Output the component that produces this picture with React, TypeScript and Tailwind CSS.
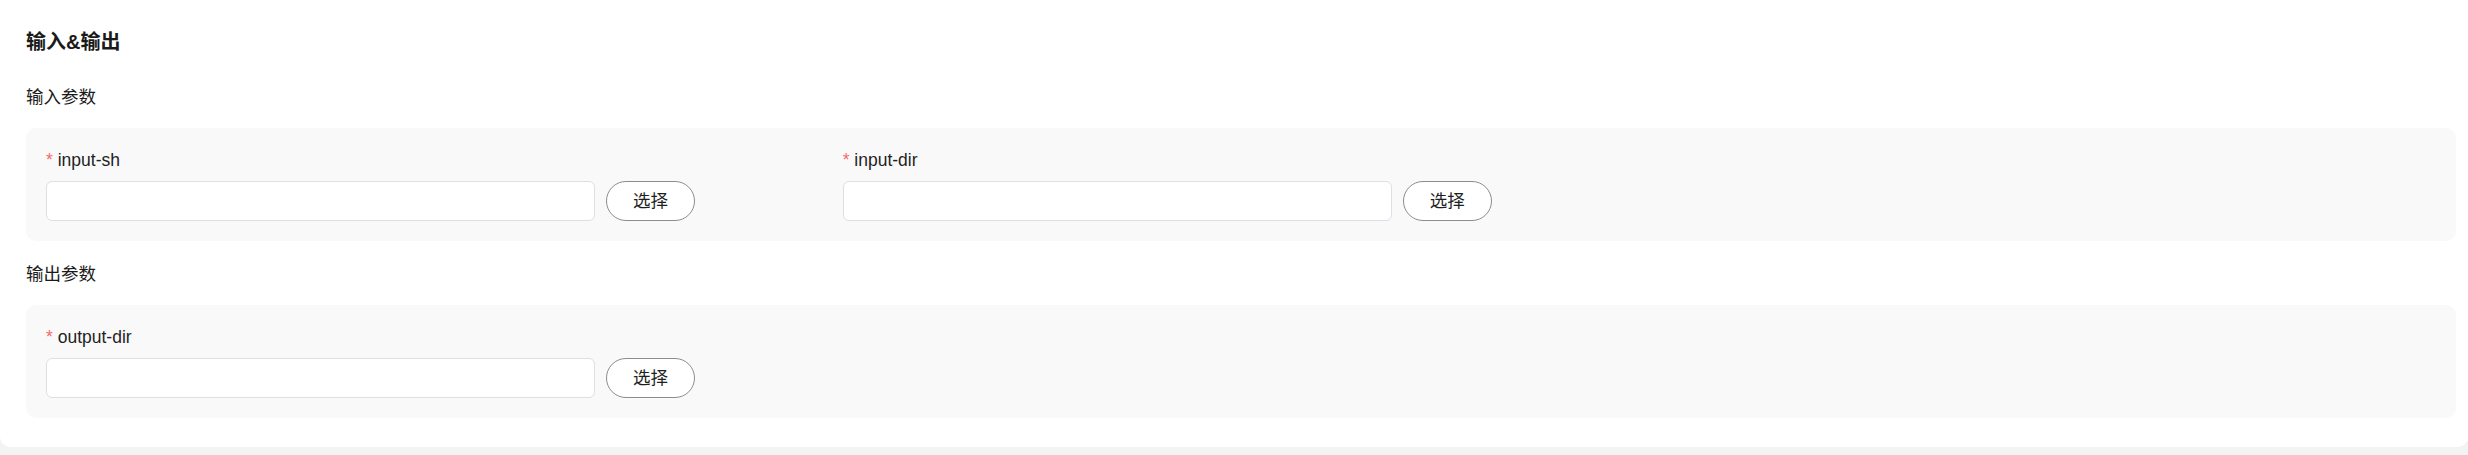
import React from "react";

type Field = {
  name: string;
};

const FONT = "font-['Liberation_Sans','Noto_Sans_CJK_SC',sans-serif]";

function PathField({ field }: { field: Field }) {
  return (
    <div>
      <div className="h-[24px] leading-[24px] mb-[9px] text-[17.5px] text-[#1f1f1f]">
        <span className="text-[#f56c6c]">*</span> {field.name}
      </div>
      <div className="flex items-center gap-[11px]">
        <input
          type="text"
          className="w-[549px] h-[40px] rounded-[6px] border border-[#dcdfe6] bg-white px-3 text-[17.5px] outline-none"
        />
        <button
          type="button"
          className="w-[89px] h-[40px] rounded-full border border-[#8c8c8c] bg-white text-[17.5px] text-[#1f1f1f]"
        >
          选择
        </button>
      </div>
    </div>
  );
}

function ParamSection({ title, fields, first }: { title: string; fields: Field[]; first?: boolean }) {
  return (
    <div className={first ? "" : "mt-[21px]"}>
      <div className="h-[24px] leading-[24px] mb-[19px] text-[17.5px] text-[#1a1a1a]">{title}</div>
      <div className="rounded-[10px] bg-[#f9f9f9] p-[20px] grid grid-cols-3">
        {fields.map((f) => (
          <PathField key={f.name} field={f} />
        ))}
      </div>
    </div>
  );
}

export default function App() {
  return (
    <div className={`${FONT} bg-[#f3f3f3] min-h-screen`}>
      <div className="bg-white rounded-b-[10px] pl-[26px] pr-[12px] pt-[28px] pb-[29px]">
        {/* 标题 */}
        <h2 className="h-[28px] leading-[28px] mb-[29px] text-[20px] font-bold text-[#1a1a1a]">输入&amp;输出</h2>

        <ParamSection
          first
          title="输入参数"
          fields={[{ name: "input-sh" }, { name: "input-dir" }]}
        />
        <ParamSection title="输出参数" fields={[{ name: "output-dir" }]} />
      </div>
    </div>
  );
}
